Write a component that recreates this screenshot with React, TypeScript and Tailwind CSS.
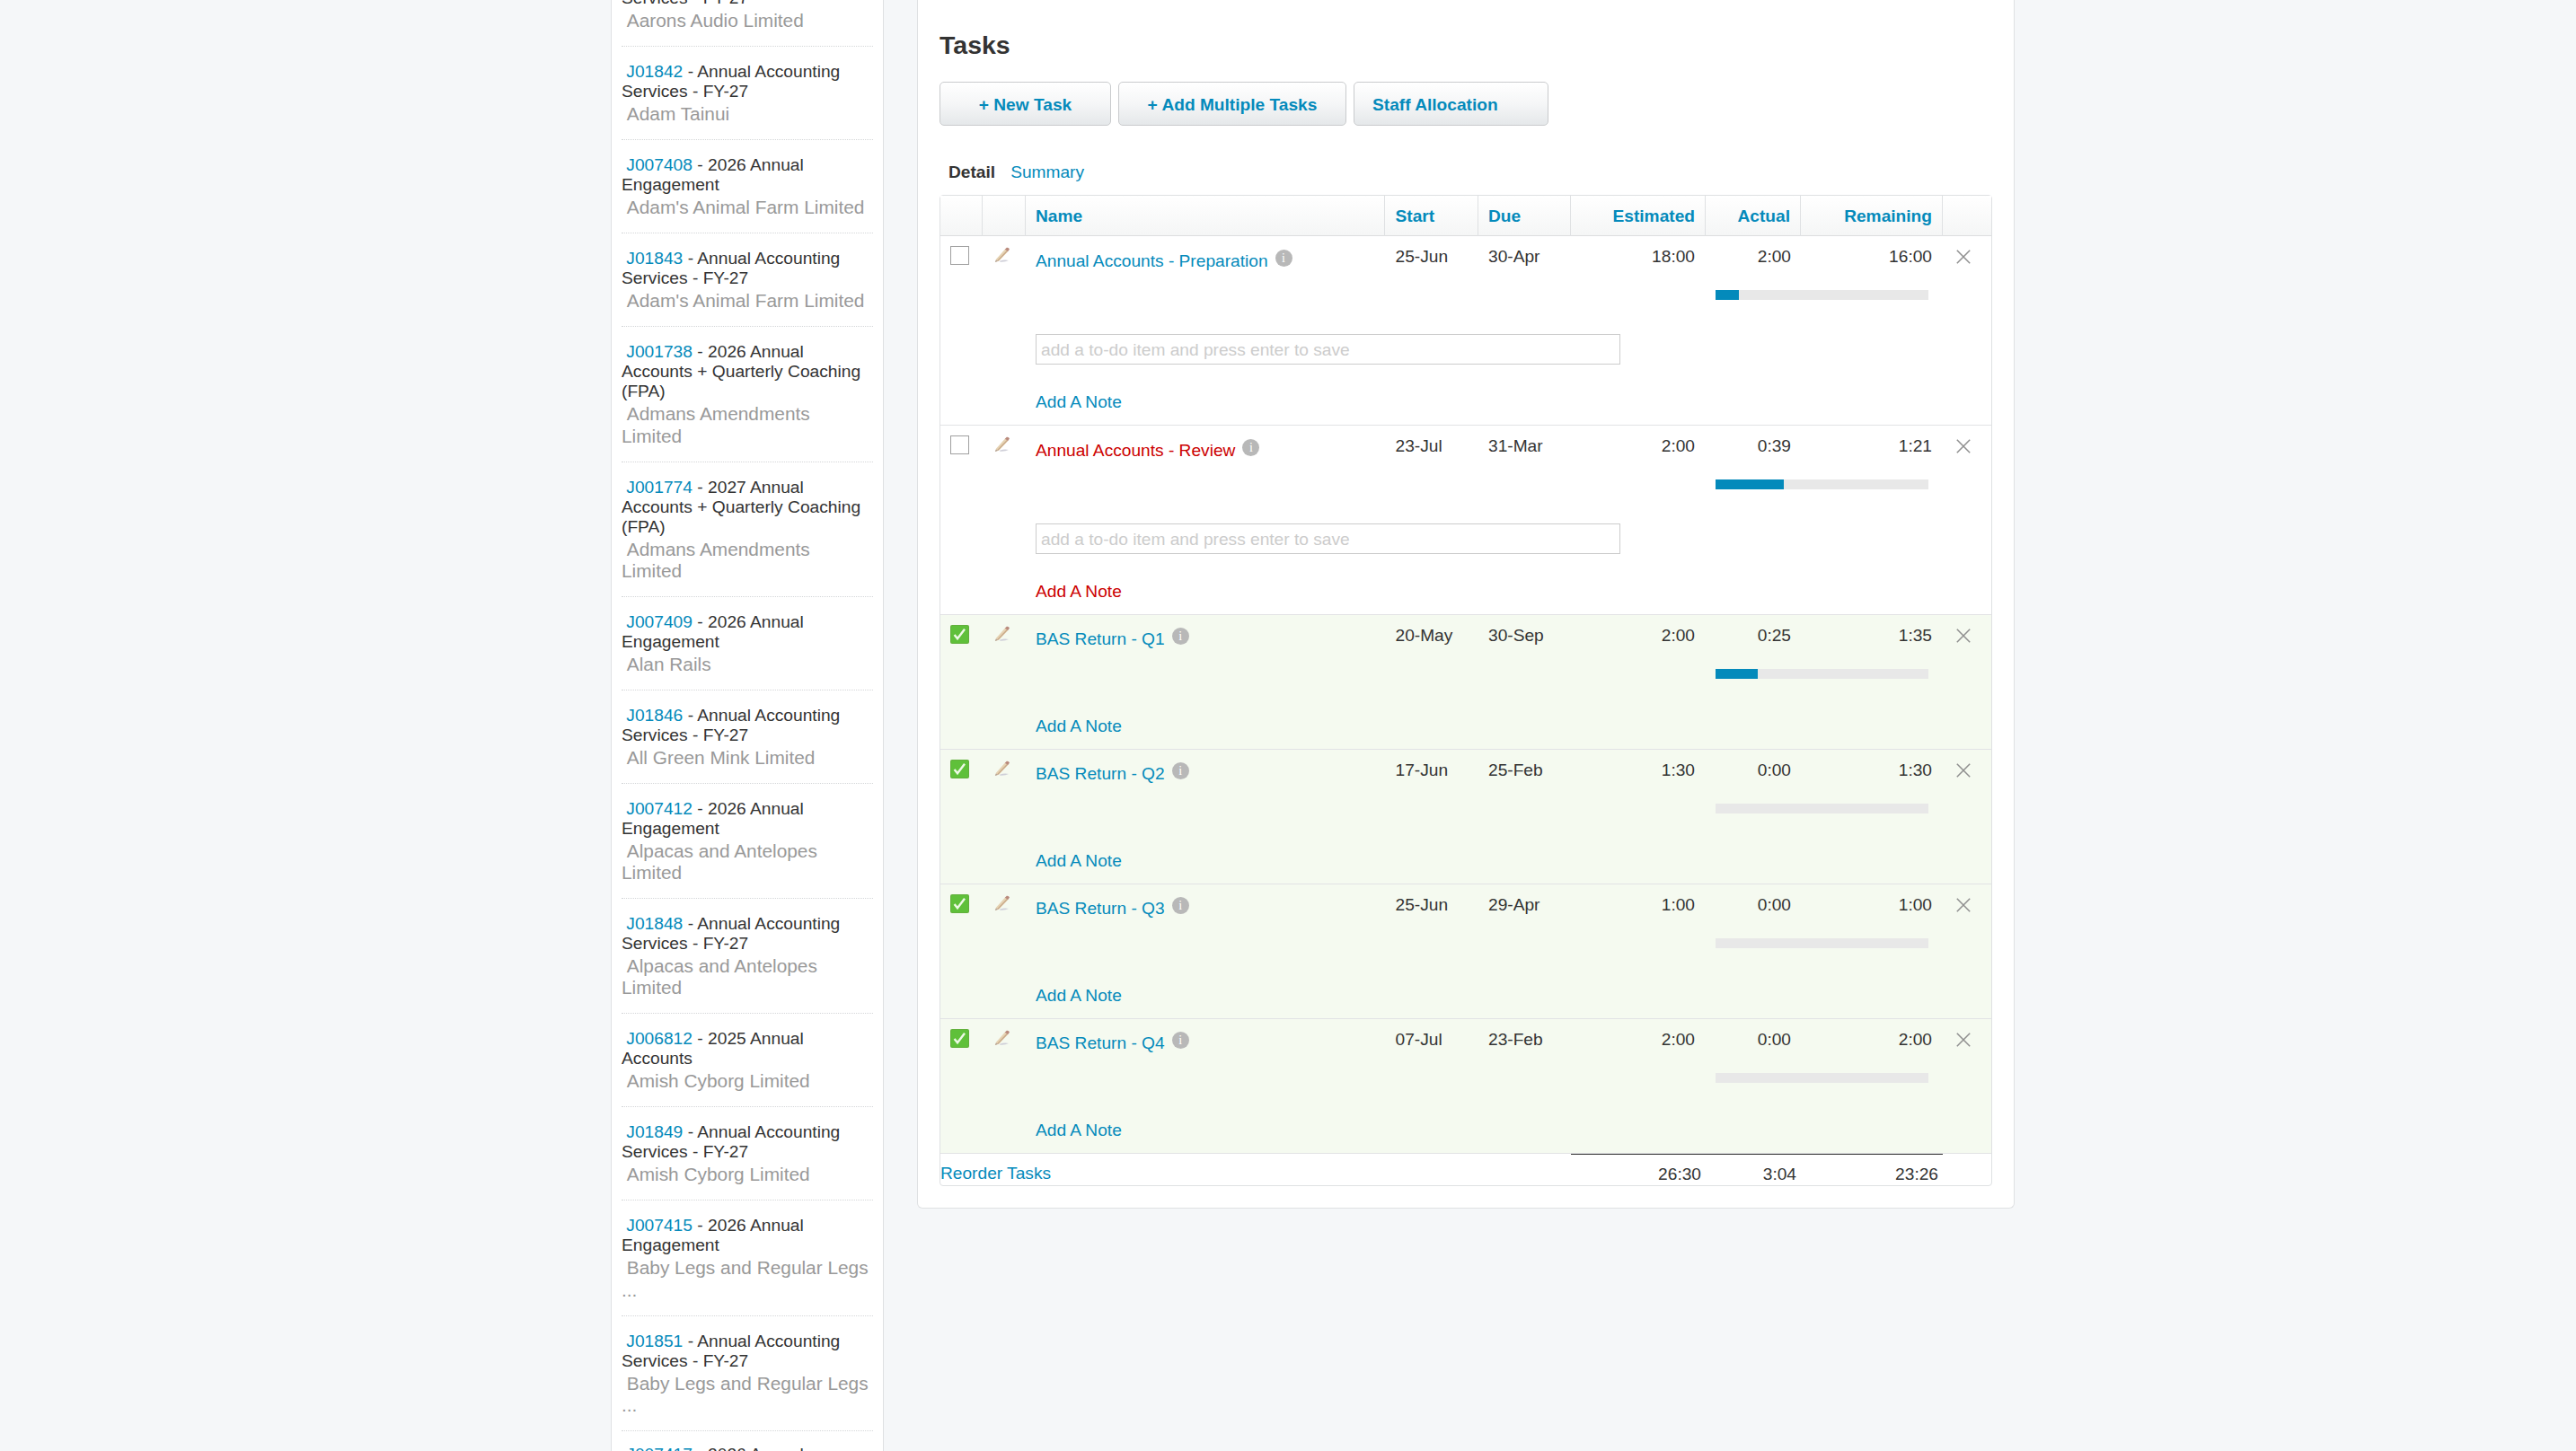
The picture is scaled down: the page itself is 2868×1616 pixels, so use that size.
import React from "react";

type Job = { code: string; title: string[]; client: string[] };

const jobs: Job[] = [
  { code: "J01841", title: ["Annual Accounting", "Services - FY-27"], client: ["Aarons Audio Limited"] },
  { code: "J01842", title: ["Annual Accounting", "Services - FY-27"], client: ["Adam Tainui"] },
  { code: "J007408", title: ["2026 Annual", "Engagement"], client: ["Adam's Animal Farm Limited"] },
  { code: "J01843", title: ["Annual Accounting", "Services - FY-27"], client: ["Adam's Animal Farm Limited"] },
  { code: "J001738", title: ["2026 Annual", "Accounts + Quarterly Coaching", "(FPA)"], client: ["Admans Amendments", "Limited"] },
  { code: "J001774", title: ["2027 Annual", "Accounts + Quarterly Coaching", "(FPA)"], client: ["Admans Amendments", "Limited"] },
  { code: "J007409", title: ["2026 Annual", "Engagement"], client: ["Alan Rails"] },
  { code: "J01846", title: ["Annual Accounting", "Services - FY-27"], client: ["All Green Mink Limited"] },
  { code: "J007412", title: ["2026 Annual", "Engagement"], client: ["Alpacas and Antelopes", "Limited"] },
  { code: "J01848", title: ["Annual Accounting", "Services - FY-27"], client: ["Alpacas and Antelopes", "Limited"] },
  { code: "J006812", title: ["2025 Annual", "Accounts"], client: ["Amish Cyborg Limited"] },
  { code: "J01849", title: ["Annual Accounting", "Services - FY-27"], client: ["Amish Cyborg Limited"] },
  { code: "J007415", title: ["2026 Annual", "Engagement"], client: ["Baby Legs and Regular Legs", "..."] },
  { code: "J01851", title: ["Annual Accounting", "Services - FY-27"], client: ["Baby Legs and Regular Legs", "..."] },
  { code: "J007417", title: ["2026 Annual"], client: [] },
];

type Task = {
  name: string;
  start: string;
  due: string;
  est: string;
  act: string;
  rem: string;
  pct: number;
  done?: boolean;
  late?: boolean;
};

const tasks: Task[] = [
  { name: "Annual Accounts - Preparation", start: "25-Jun", due: "30-Apr", est: "18:00", act: "2:00", rem: "16:00", pct: 11 },
  { name: "Annual Accounts - Review", start: "23-Jul", due: "31-Mar", est: "2:00", act: "0:39", rem: "1:21", pct: 32, late: true },
  { name: "BAS Return - Q1", start: "20-May", due: "30-Sep", est: "2:00", act: "0:25", rem: "1:35", pct: 20, done: true },
  { name: "BAS Return - Q2", start: "17-Jun", due: "25-Feb", est: "1:30", act: "0:00", rem: "1:30", pct: 0, done: true },
  { name: "BAS Return - Q3", start: "25-Jun", due: "29-Apr", est: "1:00", act: "0:00", rem: "1:00", pct: 0, done: true },
  { name: "BAS Return - Q4", start: "07-Jul", due: "23-Feb", est: "2:00", act: "0:00", rem: "2:00", pct: 0, done: true },
];

const grid = "grid grid-cols-[47px_48px_400px_104px_103px_150px_106px_158px_54px]";

function Pencil() {
  return (
    <svg width="18" height="18" viewBox="0 0 18 18" className="block">
      <path d="M6 15.8 Q11 13.8 16 15 Q12 17 6 16.6 Z" fill="#cfcfd8" />
      <path d="M2.2 13.6 L12 2.4 L15.4 4.8 L5.4 15.6 L1 17 Z" fill="#e6d3b3" />
      <path d="M3.8 15.4 L14.6 4.2" stroke="#c8a888" strokeWidth="1.3" />
      <path d="M11.8 2.8 L13.8 0.8 Q16 0.4 17 2.4 L15.2 5 Z" fill="#b98a7c" />
      <path d="M0.8 17 L1.8 14.4 L4.4 15.8 Z" fill="#b5a497" />
    </svg>
  );
}

function CheckBox({ done }: { done?: boolean }) {
  if (!done) return <div className="h-[21px] w-[21px] border border-[#a0a0a0] bg-white" />;
  return (
    <svg width="21" height="21" viewBox="0 0 21 21" className="block">
      <rect width="21" height="21" rx="2" fill="#62b03c" />
      <rect x="1" y="1" width="19" height="19" rx="1.5" fill="#5fc03a" />
      <path d="M4.6 11 L8 15.2 L16 4.8" fill="none" stroke="#eef9e6" strokeWidth="2.4" />
    </svg>
  );
}

function Info() {
  return (
    <span className="-mt-[2px] flex h-[19px] w-[19px] items-center justify-center rounded-full bg-[#b8b8b8] font-['Liberation_Serif',serif] text-[14px] leading-none text-white">
      i
    </span>
  );
}

function Cross() {
  return (
    <svg width="16" height="16" viewBox="0 0 16 16" className="block">
      <path d="M0.8 0.8 L15.2 15.2 M15.2 0.8 L0.8 15.2" stroke="#8f8f8f" strokeWidth="1.5" />
    </svg>
  );
}

function JobItem({ job }: { job: Job }) {
  return (
    <li className={`border-t border-dotted border-[#d4d6d8] pb-[15.7px] ${job.client.length ? "pt-[17px]" : "pt-[15px]"}`}>
      <div className="pb-[2px]">
        {job.title.map((line, i) => (
          <div key={i} className="h-[22px] text-[19.2px] leading-[22px] text-[#333]">
            {i === 0 && (
              <>
                &nbsp;<a className="text-[#048abb]">{job.code}</a> -{" "}
              </>
            )}
            {line}
          </div>
        ))}
      </div>
      {job.client.map((line, i) => (
        <div key={i} className="h-[24.3px] text-[20.85px] leading-6 text-[#999]">
          {i === 0 && <>&nbsp;</>}
          {line}
        </div>
      ))}
    </li>
  );
}

function TaskRow({ task }: { task: Task }) {
  const link = task.late ? "text-[#cc0000]" : "text-[#048abb]";
  return (
    <div
      className={`${grid} border-b border-[#e2e3e5] ${task.done ? "h-[150px] bg-[#f5faf0]" : "h-[211px] bg-white"}`}
    >
      <div className="pl-[11px] pt-[11px]">
        <CheckBox done={task.done} />
      </div>
      <div className="pl-[13px] pt-3">
        <Pencil />
      </div>
      <div className={`flex flex-col justify-between pb-[14px] pl-[11px] ${task.done ? "pt-4" : "pt-[17px]"}`}>
        <div className={`flex h-[22px] gap-2 leading-[22px] ${link}`}>
          <a>{task.name}</a>
          <Info />
        </div>
        <div>
          {!task.done && (
            <input
              className="mb-[31px] block h-[34px] w-[651px] border border-[#ccc] bg-white px-[5px] pt-[2px] placeholder:text-[#ccc]"
              placeholder="add a to-do item and press enter to save"
            />
          )}
          <a className={`block h-[22px] leading-[22px] ${link}`}>Add A Note</a>
        </div>
      </div>
      <div className="pl-[11.5px] pt-3 leading-[22px]">{task.start}</div>
      <div className="pl-[11px] pt-3 leading-[22px]">{task.due}</div>
      <div className="pr-3 pt-3 text-right leading-[22px]">{task.est}</div>
      <div className="col-span-2 pl-[11px] pr-4 pt-3 leading-[22px]">
        <div className="-mr-1 flex justify-between">
          <span className="w-[84px] text-right">{task.act}</span>
          <span>{task.rem}</span>
        </div>
        <div className="mt-[26px] h-[11px] w-[237px] bg-[#e8e8e8]">
          <div className="h-full bg-[#048abb]" style={{ width: `${task.pct}%` }} />
        </div>
      </div>
      <div className="pl-[15px] pt-[15px]">
        <Cross />
      </div>
    </div>
  );
}

const btn =
  "flex h-[49px] items-center rounded-[5px] border border-[#c9cbcd] bg-linear-to-b from-white via-[#f5f6f7] to-[#e5e8ea] pt-[2px] font-bold text-[#048abb]";

export default function App() {
  return (
    <div className="flex h-[1616px] w-[2868px] items-start overflow-hidden bg-[#f5f7f9] pl-[680px] font-['Liberation_Sans',Arial,sans-serif] text-[19.15px] leading-[22px] text-[#333]">
      <aside className="h-[1616px] w-[304px] shrink-0 overflow-hidden border-x border-[#dfe1e3] bg-white pl-[11px] pr-[11px]">
        <ul className="-mt-[52.6px] whitespace-nowrap">
          {jobs.map((j) => (
            <JobItem key={j.code} job={j} />
          ))}
        </ul>
      </aside>

      <main className="ml-[37px] h-[1346px] w-[1222px] shrink-0 rounded-b-[6px] border border-t-0 border-[#dfe1e3] bg-white px-6">
        <h2 className="pt-[34px] text-[28.5px] font-bold leading-8">Tasks</h2>
        <div className="mt-[25px] flex gap-2">
          <button className={`${btn} w-[191px] justify-center`}>+ New Task</button>
          <button className={`${btn} w-[254px] justify-center`}>+ Add Multiple Tasks</button>
          <button className={`${btn} w-[217px] pl-5`}>Staff Allocation</button>
        </div>
        <div className="mt-[41px] flex gap-[17px] pl-[10px]">
          <span className="font-bold">Detail</span>
          <a className="text-[#048abb]">Summary</a>
        </div>

        <section className="mt-[14px] h-[1104px] w-[1172px] rounded-[4px] border border-[#dfe1e3]">
          <div
            className={`${grid} h-[45px] border-b border-[#dcdedf] bg-linear-to-b from-white to-[#f5f6f6] font-bold leading-[45px] text-[#048abb]`}
          >
            <div className="border-r border-[#dfe1e3]" />
            <div className="border-r border-[#dfe1e3]" />
            <div className="border-r border-[#dfe1e3] pl-[11px]">Name</div>
            <div className="border-r border-[#dfe1e3] pl-[11.5px]">Start</div>
            <div className="border-r border-[#dfe1e3] pl-[11px]">Due</div>
            <div className="border-r border-[#dfe1e3] pr-[11px] text-right">Estimated</div>
            <div className="border-r border-[#dfe1e3] pr-[11px] text-right">Actual</div>
            <div className="border-r border-[#dfe1e3] pr-[11px] text-right">Remaining</div>
            <div />
          </div>
          {tasks.map((t) => (
            <TaskRow key={t.name} task={t} />
          ))}
          <div className={`${grid} leading-[22px]`}>
            <a className="col-span-5 pt-[11px] text-[#048abb]">Reorder Tasks</a>
            <div className="border-t border-[#333] pr-[5px] pt-[11px] text-right">26:30</div>
            <div className="border-t border-[#333] pr-[5px] pt-[11px] text-right">3:04</div>
            <div className="border-t border-[#333] pr-[5px] pt-[11px] text-right">23:26</div>
          </div>
        </section>
      </main>
    </div>
  );
}
